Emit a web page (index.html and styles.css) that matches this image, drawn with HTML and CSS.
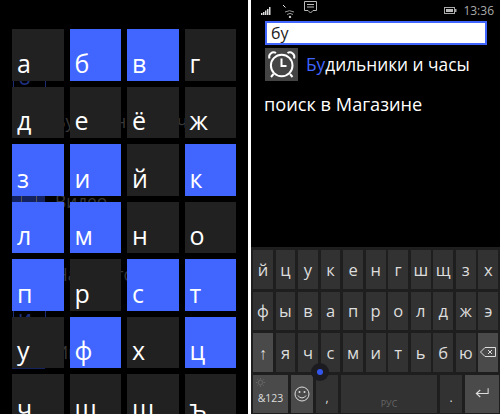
FILE: index.html
```html
<!DOCTYPE html>
<html>
<head>
  <title>Поиск приложений</title>
  <link rel="stylesheet" href="styles.css">
</head>
<body>
  <div class="screen left">
    <div class="ghost">
      <div class="ghost-head head-b">б</div>
      <div class="ghost-row row-alarm"><span class="ghost-tile"></span><span>Будильники и часы</span></div>
      <div class="ghost-row row-video"><span class="ghost-tile"><span class="ghost-box"></span></span><span>Видео</span></div>
      <div class="ghost-row row-empty"><span class="ghost-tile"></span></div>
      <div class="ghost-row row-nav"><span>Навигатор</span></div>
      <div class="ghost-head head-i">и</div>
      <div class="ghost-row row-games"><span class="ghost-tile"></span><span>Игры</span></div>
    </div>
    <div class="letters">
      <div class="tile">а</div>
      <div class="tile on">б</div>
      <div class="tile on">в</div>
      <div class="tile">г</div>
      <div class="tile">д</div>
      <div class="tile">е</div>
      <div class="tile">ё</div>
      <div class="tile">ж</div>
      <div class="tile on">з</div>
      <div class="tile on">и</div>
      <div class="tile">й</div>
      <div class="tile on">к</div>
      <div class="tile on">л</div>
      <div class="tile on">м</div>
      <div class="tile">н</div>
      <div class="tile">о</div>
      <div class="tile on">п</div>
      <div class="tile">р</div>
      <div class="tile on">с</div>
      <div class="tile on">т</div>
      <div class="tile">у</div>
      <div class="tile on">ф</div>
      <div class="tile">х</div>
      <div class="tile on">ц</div>
      <div class="tile">ч</div>
      <div class="tile">ш</div>
      <div class="tile">щ</div>
      <div class="tile">ъ</div>
    </div>
  </div>

  <div class="screen right">
    <div class="status">
      <svg class="ico-signal" width="10" height="8" viewBox="0 0 10 8">
        <path fill="#ddd" d="M0 6h1.500v2H0zM2 5h1.500v3H2zM4 3.500h1.500V8H4zM6 2h1.500v6H6zM8 0h1.500v8H8z"/>
      </svg>
      <svg class="ico-wifi" width="13" height="14" viewBox="0 0 13 14">
        <path fill="none" stroke="#999" d="M3 8a9 9 0 0 1 9 0M5 10.500a5 5 0 0 1 6 0"/>
        <circle cx="8" cy="13" r="1.200" fill="#ccc"/>
        <path stroke="#eee" d="M1 1l2.500 2.500"/>
      </svg>
      <svg class="ico-msg" width="13" height="14" viewBox="0 0 13 14">
        <path fill="none" stroke="#bbb" d="M.5.5h12v9H9l-2.500 2.500L4 9.500H.5z"/>
        <path stroke="#bbb" d="M3 3.500h7M3 6h7"/>
      </svg>
      <svg class="ico-batt" width="13" height="7" viewBox="0 0 13 7">
        <rect x=".5" y=".5" width="10" height="6" fill="none" stroke="#aaa"/>
        <rect x="2" y="2" width="7" height="3" fill="#bbb"/>
        <rect x="11" y="2" width="1.500" height="3" fill="#aaa"/>
      </svg>
      <span class="clock">13:36</span>
    </div>
    <div class="search">бу</div>
    <div class="result">
      <div class="app-icon">
        <svg width="33" height="33" viewBox="0 0 33 33">
          <circle cx="16.700" cy="17.500" r="10.800" fill="none" stroke="#fff" stroke-width="2"/>
          <path fill="none" stroke="#fff" stroke-width="2" d="M4.500 10.500a4.500 4.500 0 0 1 6.500-5.500M29 10.500a4.500 4.500 0 0 0-6.500-5.500"/>
          <path fill="none" stroke="#fff" stroke-width="2" d="M16.500 10.500v7.500h5M8.500 26l-2.500 3M25 26l2.500 3"/>
        </svg>
      </div>
      <div class="app-name"><span class="hit">Бу</span>дильники и часы</div>
    </div>
    <div class="store">поиск в Магазине</div>

    <div class="keyboard">
      <div class="keys">
        <div class="key">й</div><div class="key">ц</div><div class="key">у</div><div class="key">к</div><div class="key">е</div><div class="key">н</div><div class="key">г</div><div class="key">ш</div><div class="key">щ</div><div class="key">з</div><div class="key">х</div>
      </div>
      <div class="keys">
        <div class="key">ф</div><div class="key">ы</div><div class="key">в</div><div class="key">а</div><div class="key">п</div><div class="key">р</div><div class="key">о</div><div class="key">л</div><div class="key">д</div><div class="key">ж</div><div class="key">э</div>
      </div>
      <div class="keys">
        <div class="key fn">↑</div><div class="key">я</div><div class="key">ч</div><div class="key">с</div><div class="key">м</div><div class="key">и</div><div class="key">т</div><div class="key">ь</div><div class="key">б</div><div class="key">ю</div>
        <div class="key fn">
          <svg width="16" height="10" viewBox="0 0 16 10">
            <path fill="none" stroke="#ddd" d="M5 .5h10.500v9H5L.5 5z"/>
            <path stroke="#ddd" d="M8 3l4 4M12 3l-4 4"/>
          </svg>
        </div>
      </div>
      <div class="bottom-keys">
        <div class="key fn k-num">
          <svg class="ico-sun" width="9" height="9" viewBox="0 0 9 9">
            <circle cx="4.500" cy="4.500" r="2.200" fill="none" stroke="#666"/>
            <path stroke="#666" d="M4.500 0v1.500M4.500 7.500V9M0 4.500h1.500M7.500 4.500H9M1.300 1.300l1 1M6.700 6.700l1 1M1.300 7.700l1-1M6.700 2.300l1-1"/>
          </svg>
          &amp;123
        </div>
        <div class="key fn k-emo">
          <svg width="16" height="16" viewBox="0 0 16 16">
            <circle cx="8" cy="8" r="7" fill="none" stroke="#ddd"/>
            <circle cx="5.500" cy="6" r="1" fill="#ddd"/>
            <circle cx="10.500" cy="6" r="1" fill="#ddd"/>
            <path fill="none" stroke="#ddd" d="M4 9.500a4.500 4.500 0 0 0 8 0"/>
          </svg>
        </div>
        <div class="key k-mid k-mark">,</div>
        <div class="key k-space">РУС</div>
        <div class="key k-mid k-mark">.</div>
        <div class="key fn k-enter">
          <svg width="14" height="11" viewBox="0 0 16 12">
            <path fill="none" stroke="#ddd" stroke-width="1.200" d="M15 0v6H2M6 2L1.500 6 6 10"/>
          </svg>
        </div>
      </div>
      <div class="cursor"><span class="cursor-dot"></span></div>
    </div>
  </div>
</body>
</html>
```

FILE: styles.css
```css
html, body {
  margin: 0;
  height: 100%;
  overflow: hidden;
}
body {
  display: flex;
  gap: 3px;
  background: #fff;
  font-family: "Open Sans", "Noto Sans", sans-serif;
  color: #fff;
}
.screen {
  position: relative;
  height: 414px;
  background: #000;
  overflow: hidden;
}
.left {
  width: 248px;
  flex: none;
}
.right {
  flex: 1;
  display: flex;
  flex-direction: column;
}

/* app list showing through behind the letter tiles */
.ghost {
  position: absolute;
  top: 0;
  left: 12px;
  width: 230px;
  color: #383838;
  font-size: 17.300px;
}
.ghost-head {
  width: 27px;
  height: 28px;
  margin-left: 1px;
  padding-left: 4px;
  border: 1px solid #1b2c72;
  color: #1f3180;
  font-size: 22px;
  line-height: 26px;
}
.head-b { margin-top: 62px; }
.head-i { margin-top: 12px; }
.ghost-row {
  display: flex;
  align-items: center;
  gap: 10px;
  height: 33px;
  white-space: nowrap;
}
.ghost-tile {
  width: 33px;
  height: 33px;
  flex: none;
  background: #14235f;
}
.ghost-box {
  display: block;
  width: 14px;
  height: 14px;
  margin: 10px 0 0 9px;
  border: 1px solid #555;
}
.row-alarm { margin-top: 13px; }
.row-video { margin-top: 47px; }
.row-empty { margin-top: 1px; }
.row-nav { margin: 6px 0 0 43px; }
.row-games { margin-top: 3px; }

.letters {
  position: relative;
  display: grid;
  grid-template-columns: repeat(4, 51.5px);
  grid-auto-rows: 51.5px;
  gap: 6px;
  padding: 29px 12px 0;
}
.tile {
  display: flex;
  align-items: flex-end;
  padding: 0 0 1px 5px;
  background: #212121;
  font-size: 25px;
  line-height: 34px;
  box-sizing: border-box;
}
.tile.on {
  background: #4066ff;
}

.status {
  display: flex;
  align-items: center;
  height: 21px;
  padding: 0 6px 0 10px;
  font-size: 12px;
  color: #aaa;
}
.ico-wifi { margin-left: 11px; }
.ico-msg { margin: -6px 0 0 9px; }
.ico-batt { margin-left: auto; }
.clock { margin-left: 6px; }

.search {
  height: 20px;
  margin: 0 13px 0 14px;
  padding-left: 4px;
  border: 2px solid #4066ff;
  background: #fff;
  color: #222;
  font-size: 16px;
  line-height: 20px;
}
.result {
  display: flex;
  align-items: center;
  gap: 8px;
  margin: 3px 0 0 14px;
}
.app-icon {
  width: 33px;
  height: 33px;
  background: #444;
}
.app-name {
  font-size: 17.300px;
}
.hit {
  color: #4066ff;
}
.store {
  margin: 12px 0 0 13px;
  font-size: 18.200px;
  line-height: 22px;
}

.keyboard {
  position: relative;
  display: flex;
  flex-direction: column;
  gap: 3px;
  margin-top: auto;
  height: 167px;
  padding: 3px 1px 0 2px;
  box-sizing: border-box;
  background: #1e1e1e;
}
.keys {
  display: grid;
  grid-template-columns: repeat(11, 19.800px);
  gap: 2.750px;
  height: 38.500px;
}
.bottom-keys {
  display: flex;
  gap: 3px;
  height: 38px;
}
.key {
  display: flex;
  align-items: center;
  justify-content: center;
  background: #323232;
  color: #ddd;
  font-size: 16.500px;
}
.fn {
  background: #4a4a4a;
}
.k-num {
  position: relative;
  width: 35px;
  padding-top: 9px;
  box-sizing: border-box;
  font-size: 10.500px;
}
.ico-sun {
  position: absolute;
  top: 3px;
  left: 3px;
}
.k-emo { width: 22px; }
.k-mid { width: 22px; }
.k-mark {
  align-items: flex-end;
  padding-bottom: 7px;
  box-sizing: border-box;
  font-size: 12px;
}
.k-space {
  width: 96px;
  align-items: flex-end;
  padding-bottom: 3px;
  box-sizing: border-box;
  color: #666;
  font-size: 9px;
}
.k-enter { width: 34px; }

/* text cursor handle sits over the keys */
.cursor {
  position: absolute;
  top: 116px;
  left: 60px;
  width: 18px;
  height: 18px;
  display: flex;
  align-items: center;
  justify-content: center;
  border-radius: 50%;
  background: #1c1c20;
}
.cursor-dot {
  width: 6px;
  height: 6px;
  border-radius: 50%;
  background: #3355ee;
}
```
